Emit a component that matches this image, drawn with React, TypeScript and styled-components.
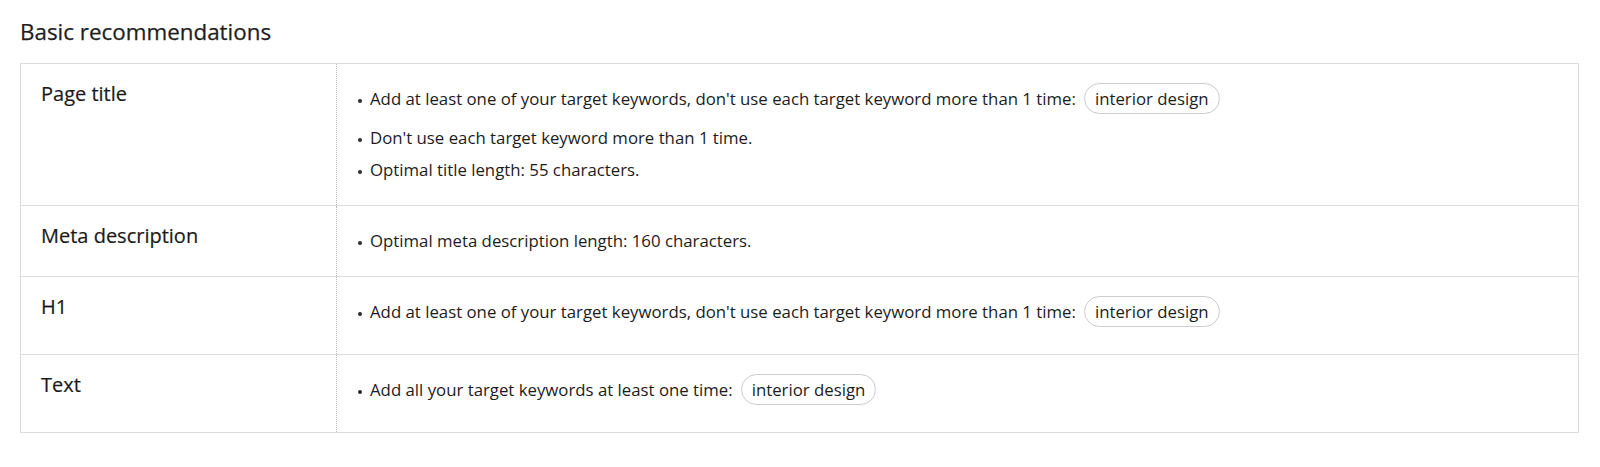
import React from "react";
import styled, { createGlobalStyle } from "styled-components";

const GlobalStyle = createGlobalStyle`
  html, body {
    margin: 0;
    padding: 0;
    background: #ffffff;
  }
  body {
    font-family: "Open Sans", "Noto Sans", sans-serif;
    color: #1f1f1f;
  }
`;

const Page = styled.div`
  padding: 17px 21px 0 20px;
`;

const Title = styled.h2`
  margin: 0 0 16px;
  font-size: 22.4px;
  line-height: 30px;
  font-weight: 500;
  color: #1e1e1e;
  -webkit-text-stroke: 0.25px #1e1e1e;
`;

const Table = styled.div`
  border: 1px solid #dcdcdc;
  display: flex;
  flex-direction: column;
`;

const Row = styled.div`
  display: grid;
  grid-template-columns: 315px 1fr;
  & + & {
    border-top: 1px solid #dcdcdc;
  }
`;

const Label = styled.div`
  padding: 18px 20px;
  font-size: 20px;
  line-height: 24px;
  font-weight: 500;
  color: #1a1a1a;
  -webkit-text-stroke: 0.2px #1a1a1a;
`;

const Content = styled.div`
  border-left: 1px dotted #b8b8b8;
  padding: 19px 24px 19px 21px;
`;

const List = styled.ul`
  margin: 0;
  padding: 0;
  list-style: none;
`;

const Item = styled.li`
  font-size: 16.8px;
  line-height: 32px;
  color: #1c1c1c;
  &::before {
    content: "";
    display: inline-block;
    width: 4px;
    height: 4px;
    border-radius: 50%;
    background: #2b2b2b;
    vertical-align: middle;
    margin-right: 8px;
  }
`;

const Pill = styled.span`
  display: inline-block;
  margin: 0 0 8px 8px;
  padding: 3px 10px 2px;
  border: 1px solid #cccccc;
  border-radius: 16px;
  line-height: 24px;
  color: #1c1c1c;
`;

type Rec = { text: string; keyword?: string };
type Section = { label: string; items: Rec[] };

const sections: Section[] = [
  {
    label: "Page title",
    items: [
      {
        text: "Add at least one of your target keywords, don't use each target keyword more than 1 time:",
        keyword: "interior design",
      },
      { text: "Don't use each target keyword more than 1 time." },
      { text: "Optimal title length: 55 characters." },
    ],
  },
  {
    label: "Meta description",
    items: [{ text: "Optimal meta description length: 160 characters." }],
  },
  {
    label: "H1",
    items: [
      {
        text: "Add at least one of your target keywords, don't use each target keyword more than 1 time:",
        keyword: "interior design",
      },
    ],
  },
  {
    label: "Text",
    items: [{ text: "Add all your target keywords at least one time:", keyword: "interior design" }],
  },
];

export default function App() {
  return (
    <>
      <GlobalStyle />
      <Page>
        <Title>Basic recommendations</Title>
        <Table>
          {sections.map((s) => (
            <Row key={s.label}>
              <Label>{s.label}</Label>
              <Content>
                <List>
                  {s.items.map((it, i) => (
                    <Item key={i}>
                      {it.text}
                      {it.keyword && <Pill>{it.keyword}</Pill>}
                    </Item>
                  ))}
                </List>
              </Content>
            </Row>
          ))}
        </Table>
      </Page>
    </>
  );
}
